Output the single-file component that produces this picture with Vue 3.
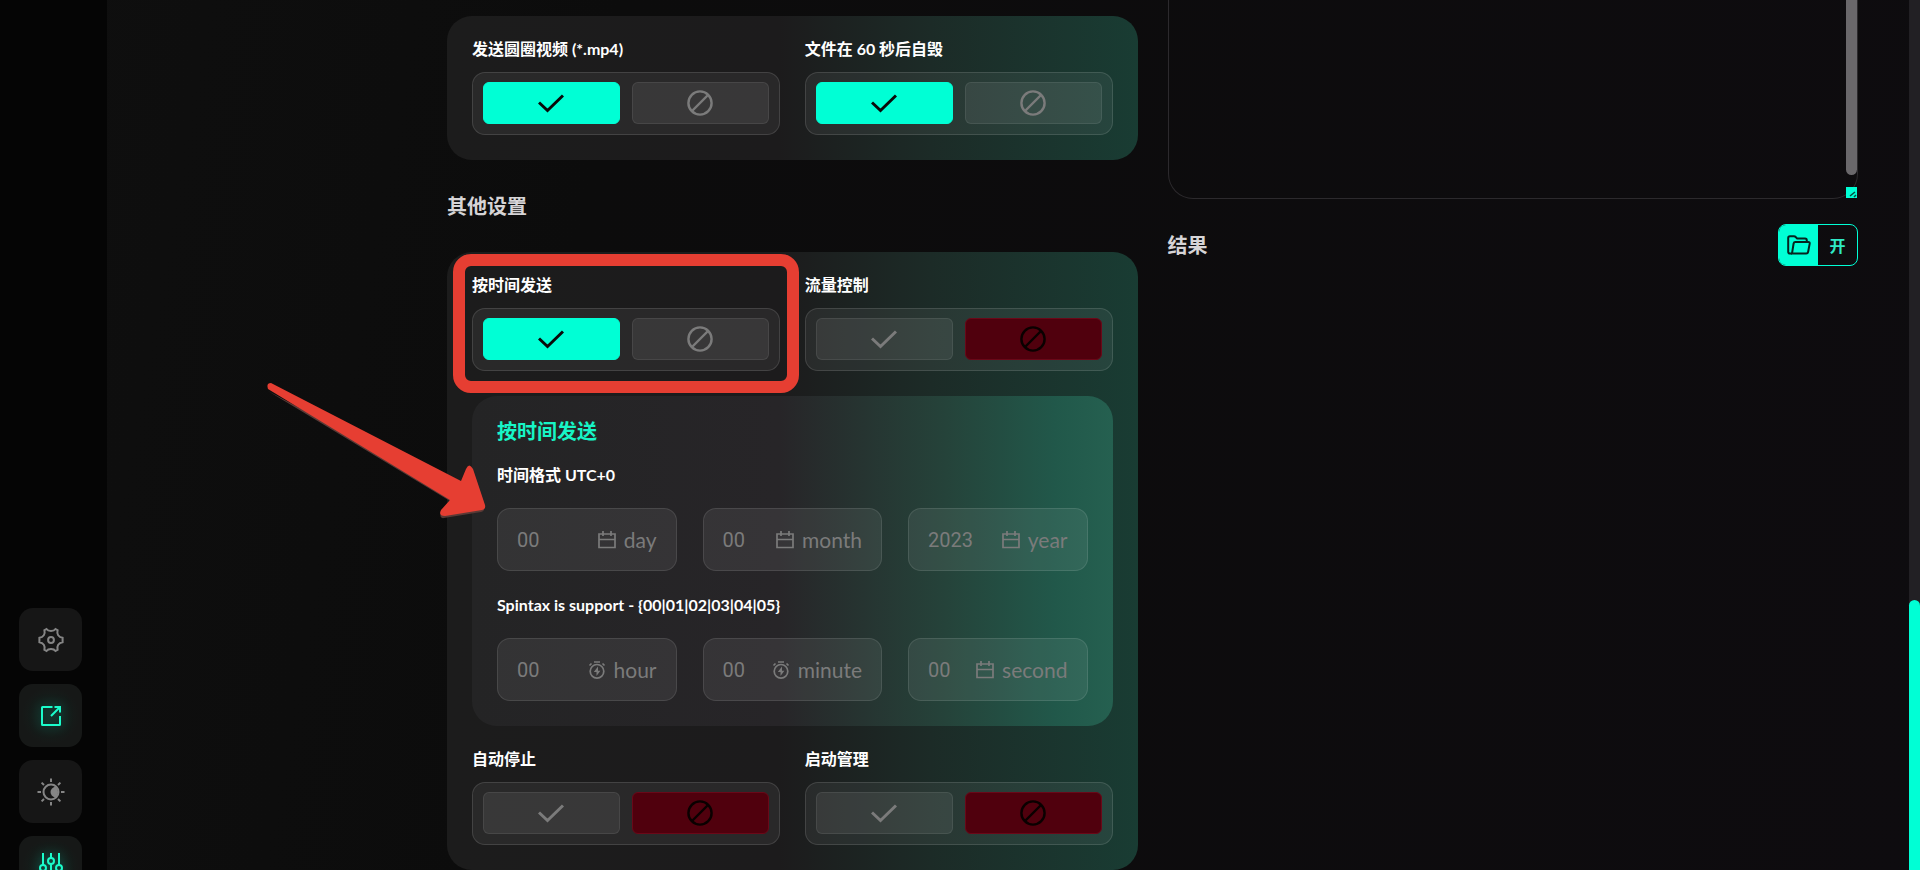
<template>
    <div class="page">
        <nav class="sidebar" aria-label="导航">
            <button class="nav-btn" type="button" aria-label="settings">
                <svg width="26" height="26" viewBox="0 0 26 26">
                    <path d="M8.5 2 Q9.8 4 13 4 Q16.2 4 17.5 2 L19.6 3.2 Q18.8 6 20.2 8.3 Q21.6 10.4 24.6 10.8 V15.2 Q21.6 15.6 20.2 17.7 Q18.8 20 19.6 22.8 L17.5 24 Q16.2 22 13 22 Q9.8 22 8.5 24 L6.4 22.8 Q7.2 20 5.8 17.7 Q4.4 15.6 1.4 15.2 V10.8 Q4.4 10.4 5.8 8.3 Q7.2 6 6.4 3.2 Z" />
                    <circle cx="13" cy="13" r="2.9" />
                </svg>
            </button>
            <button class="nav-btn active" type="button" aria-label="export">
                <svg width="26" height="26" viewBox="0 0 26 26">
                    <path d="M14.5 4 H4.5 Q4 4 4 4.5 V21.5 Q4 22 4.5 22 H21.5 Q22 22 22 21.5 V13" />
                    <path d="M13 13 L21.5 4.5 M16.5 4 H22 V9.5" />
                </svg>
            </button>
            <button class="nav-btn" type="button" aria-label="theme">
                <svg width="28" height="28" viewBox="0 0 28 28">
                    <circle cx="14" cy="14" r="7.5" />
                    <path class="solid" d="M18.5 8.4 A7.5 7.5 0 0 1 18.5 19.6 Q13.5 18 13.5 14 Q13.5 10 18.5 8.4 Z" />
                    <path d="M14 0.5 V4 M14 24 V27.5 M0.5 14 H4 M24 14 H27.5 M4.6 4.6 L7 7 M21 21 L23.4 23.4 M4.6 23.4 L7 21 M21 7 L23.4 4.6" />
                </svg>
            </button>
            <button class="nav-btn active" type="button" aria-label="filters">
                <svg width="26" height="30" viewBox="0 0 26 30">
                    <path d="M5 0 V12 M5 18 V30 M13 0 V5 M13 11 V30 M21 0 V12 M21 18 V30" />
                    <circle cx="5" cy="15" r="3" />
                    <circle cx="13" cy="8" r="3" />
                    <circle cx="21" cy="15" r="3" />
                </svg>
            </button>
        </nav>

        <main class="content">
            <div class="column settings">
                <section class="card">
                    <div v-for="item in fileOptions" :key="item.id" class="option">
                        <span :id="item.id" class="label">{{ item.label }}</span>
                        <div class="toggle" role="group" :aria-labelledby="item.id">
                            <button type="button" aria-label="on" :class="{ on: item.value }" @click="item.value = true">
                                <svg class="check" width="26" height="26" viewBox="0 0 26 26"><path d="M1 12.5 L9.5 20.5 L25 5.5" /></svg>
                            </button>
                            <button type="button" aria-label="off" :class="{ off: !item.value }" @click="item.value = false">
                                <svg width="26" height="26" viewBox="0 0 26 26"><circle cx="13" cy="13" r="11.6" /><path d="M5 21 L21 5" /></svg>
                            </button>
                        </div>
                    </div>
                </section>

                <h2 class="heading">其他设置</h2>

                <section class="card">
                    <template v-for="item in otherOptions" :key="item.id">
                        <div class="option">
                            <span :id="item.id" class="label">{{ item.label }}</span>
                            <div class="toggle" role="group" :aria-labelledby="item.id">
                                <button type="button" aria-label="on" :class="{ on: item.value }" @click="item.value = true">
                                    <svg class="check" width="26" height="26" viewBox="0 0 26 26"><path d="M1 12.5 L9.5 20.5 L25 5.5" /></svg>
                                </button>
                                <button type="button" aria-label="off" :class="{ off: !item.value }" @click="item.value = false">
                                    <svg width="26" height="26" viewBox="0 0 26 26"><circle cx="13" cy="13" r="11.6" /><path d="M5 21 L21 5" /></svg>
                                </button>
                            </div>
                            <div v-if="item.id === 'send-time'" class="marker"></div>
                        </div>

                        <div v-if="item.id === 'traffic'" class="schedule">
                            <h3>按时间发送</h3>
                            <template v-for="row in timeRows" :key="row.label">
                                <span class="label">{{ row.label }}</span>
                                <div class="fields">
                                    <label v-for="field in row.fields" :key="field.unit" class="field">
                                        <input v-model="field.value" type="text" :placeholder="field.placeholder">
                                        <svg v-if="field.icon === 'date'" width="18" height="18" viewBox="0 0 18 18">
                                            <path d="M1 3 H17 V16.5 H1 Z M1 8.5 H17 M5 0 V5 M13 0 V5" />
                                        </svg>
                                        <svg v-else width="18" height="18" viewBox="0 0 18 18">
                                            <circle cx="9" cy="10.3" r="6.8" />
                                            <path d="M6 1 H12 M1.5 4.5 L3.5 2.5 M14.5 2.5 L16.5 4.5" />
                                            <path class="solid" d="M10 5.5 L5.8 11 H8.5 V15 L12.4 9.7 H10 Z" />
                                        </svg>
                                        <span>{{ field.unit }}</span>
                                    </label>
                                </div>
                            </template>
                        </div>
                    </template>

                    <svg class="arrow" width="222" height="142" viewBox="0 0 222 142">
                        <path class="shade" d="M2 8 L184 118 L175 129 Q173 136 178 135 L215 129 Q219 128 218 124 Z" />
                        <path d="M5 1 L195 99 L200 87 Q203 80 207 87 L219 123 Q220 127 216 128 L179 134 Q172 134 175 128 L184 118 L2 7 Q0 1 5 1 Z" />
                    </svg>
                </section>
            </div>

            <div class="column output">
                <div class="log">
                    <textarea aria-label="log" readonly></textarea>
                    <span class="log-thumb"></span>
                    <svg class="log-grip" width="11" height="11" viewBox="0 0 11 11">
                        <path d="M4 9 L9 5 M8 10 L10 8" />
                    </svg>
                </div>
                <div class="result-bar">
                    <h2 class="heading">结果</h2>
                    <button class="open-btn" type="button">
                        <span class="open-icon">
                            <svg width="24" height="20" viewBox="0 0 24 20">
                                <path d="M5 18.5 H3 Q1.2 18.5 1.2 16.7 V3 Q1.2 1.2 3 1.2 H7 Q8 1.2 8.7 2 L10.2 3.6 H18 Q19.8 3.6 19.8 5.4 V7" />
                                <path d="M8.4 7 H21.3 Q23 7 22.7 8.6 L21.1 17 Q20.8 18.5 19.3 18.5 H5 L6.6 8.5 Q6.9 7 8.4 7 Z" />
                            </svg>
                        </span>
                        <span class="open-text">开</span>
                    </button>
                </div>
            </div>
        </main>

        <div class="page-scroll"><span></span></div>
    </div>
</template>

<script setup>
import { reactive } from 'vue'

const fileOptions = reactive([
    { id: 'circle-video', label: '发送圆圈视频 (*.mp4)', value: true },
    { id: 'self-destruct', label: '文件在 60 秒后自毁', value: true },
])

const otherOptions = reactive([
    { id: 'send-time', label: '按时间发送', value: true },
    { id: 'traffic', label: '流量控制', value: false },
    { id: 'auto-stop', label: '自动停止', value: false },
    { id: 'launch', label: '启动管理', value: false },
])

const timeRows = reactive([
    {
        label: '时间格式 UTC+0',
        fields: [
            { unit: 'day', placeholder: '00', value: '', icon: 'date' },
            { unit: 'month', placeholder: '00', value: '', icon: 'date' },
            { unit: 'year', placeholder: '2023', value: '', icon: 'date' },
        ],
    },
    {
        label: 'Spintax is support - {00|01|02|03|04|05}',
        fields: [
            { unit: 'hour', placeholder: '00', value: '', icon: 'timer' },
            { unit: 'minute', placeholder: '00', value: '', icon: 'timer' },
            { unit: 'second', placeholder: '00', value: '', icon: 'date' },
        ],
    },
])
</script>

<style>
body {
    margin: 0;
    background: #0d0d0d;
}
</style>

<style scoped>
* {
    box-sizing: border-box;
}

.page {
    display: flex;
    height: 100vh;
    overflow: hidden;
    background: linear-gradient(100deg, #0f0f0f, #0c0c0c 30%, #0e0c0f);
    color: #fff;
    font-family: Lato, "Noto Sans CJK SC", sans-serif;
}

button {
    padding: 0;
    border: 0;
    font: inherit;
    cursor: pointer;
}

svg {
    display: block;
    fill: none;
    stroke: currentColor;
    stroke-width: 2;
}

.solid {
    fill: currentColor;
    stroke: none;
}

/* sidebar */
.sidebar {
    display: flex;
    flex: 0 0 107px;
    flex-direction: column;
    gap: 13px;
    padding: 608px 0 0 19px;
    background: #050505;
}

.nav-btn {
    display: flex;
    flex: none;
    align-items: center;
    justify-content: center;
    width: 63px;
    height: 63px;
    border-radius: 14px;
    background: #161616;
    color: #858585;
}

.nav-btn.active {
    background: radial-gradient(circle, #14241f, #161817 65%);
    color: #1bfccb;
}

.nav-btn.active svg {
    filter: drop-shadow(0 0 6px rgba(0, 255, 213, 0.4));
}

/* main columns */
.content {
    display: grid;
    flex: 1;
    grid-template-columns: 260px 1fr 1fr;
    gap: 30px;
    padding: 0 51px 0 50px;
}

.settings {
    grid-column: 2;
    padding-top: 16px;
}

.card {
    position: relative;
    display: grid;
    grid-template-columns: 1fr 1fr;
    gap: 25px;
    padding: 25px;
    border-radius: 25px;
    background: linear-gradient(90deg, #1c1c1c, #1c1b1c 48%, #1c2b27 70%, #193c33);
}

.heading {
    margin: 36px 0;
    color: #d6d4d6;
    font-size: 20px;
    font-weight: 700;
    line-height: 20px;
}

.label {
    display: block;
    font-size: 16px;
    font-weight: 700;
    line-height: 16px;
}

.option {
    position: relative;
}

.toggle {
    display: grid;
    grid-template-columns: 1fr 1fr;
    gap: 12px;
    margin-top: 15px;
    padding: 9px 10px 10px;
    border: 1px solid rgba(255, 255, 255, 0.12);
    border-radius: 13px;
    background: rgba(255, 255, 255, 0.06);
}

.toggle button {
    display: flex;
    align-items: center;
    justify-content: center;
    height: 42px;
    border: 1px solid rgba(255, 255, 255, 0.08);
    border-radius: 6px;
    background: rgba(255, 255, 255, 0.07);
    color: #7b7b7b;
}

.toggle svg {
    stroke-width: 2.4;
}

.toggle .check {
    stroke-width: 3;
}

.toggle .on {
    border-color: #00ffd5;
    background: #00ffd5;
    color: #0a0a0a;
}

.toggle .off {
    border-color: #6a0818;
    background: #50000d;
    color: #0a0000;
}

/* schedule */
.schedule {
    grid-column: 1 / -1;
    display: grid;
    gap: 25px;
    padding: 25px;
    border-radius: 25px;
    background: linear-gradient(90deg, #242425, #272528 48%, #25433a 74%, #21584a 91%, #256050);
}

.schedule h3 {
    margin: 0;
    color: #17f5c6;
    font-size: 20px;
    font-weight: 700;
    line-height: 20px;
}

.schedule .label {
    line-height: 17px;
}

.fields {
    display: grid;
    grid-template-columns: repeat(3, 1fr);
    gap: 26px;
}

.field {
    display: flex;
    align-items: center;
    gap: 8px;
    height: 63px;
    padding: 0 19px;
    border: 1px solid rgba(255, 255, 255, 0.1);
    border-radius: 13px;
    background: rgba(255, 255, 255, 0.07);
    color: #7b7b7b;
    font-size: 21px;
}

.field svg {
    flex: none;
    stroke-width: 1.7;
}

.field input {
    flex: 1;
    width: 0;
    min-width: 0;
    padding: 0;
    border: 0;
    outline: 0;
    background: none;
    color: #fff;
    font: 400 20px Roboto, sans-serif;
}

.field input::placeholder {
    color: #7b7b7b;
    opacity: 1;
}

/* highlight and pointer */
.marker {
    position: absolute;
    inset: -23px -19px -22px;
    border: 12px solid #e63e32;
    border-radius: 18px;
    pointer-events: none;
}

.arrow {
    position: absolute;
    top: 130px;
    left: -181px;
    fill: #e63e32;
    stroke: none;
    pointer-events: none;
}

.arrow .shade {
    fill: #5a3a36;
    transform: translateY(1px);
}

/* output */
.output {
    grid-column: 3;
}

.log {
    position: relative;
    height: 199px;
}

.log textarea {
    display: block;
    width: 100%;
    height: 100%;
    padding: 25px;
    border: 1px solid #2c2a2d;
    border-top: 0;
    border-radius: 0 0 25px 25px;
    outline: 0;
    background: transparent;
    color: #fff;
    resize: none;
}

.log-thumb {
    position: absolute;
    top: 0;
    right: 1px;
    width: 11px;
    height: 175px;
    border-radius: 0 0 6px 6px;
    background: #6a686b;
}

.log-grip {
    position: absolute;
    right: 1px;
    bottom: 1px;
    background: #00ffd5;
    color: #064b3f;
    stroke-width: 1.5;
}

.result-bar {
    display: flex;
    align-items: center;
    justify-content: space-between;
    margin-top: 25px;
}

.result-bar .heading {
    margin: 0;
}

.open-btn {
    display: flex;
    width: 80px;
    height: 42px;
    overflow: hidden;
    border: 1px solid #00ffd5;
    border-radius: 8px;
    background: transparent;
    color: #2fe9c5;
}

.open-icon,
.open-text {
    display: flex;
    flex: 1;
    align-items: center;
    justify-content: center;
    height: 100%;
}

.open-icon {
    background: #00ffd5;
    color: #06231e;
}

.open-text {
    font-size: 16px;
    font-weight: 700;
}

/* page scrollbar */
.page-scroll {
    display: flex;
    flex: 0 0 11px;
    align-items: flex-end;
    background: #222024;
}

.page-scroll span {
    width: 100%;
    height: 31%;
    border-radius: 6px 6px 0 0;
    background: #00ffd5;
}
</style>
